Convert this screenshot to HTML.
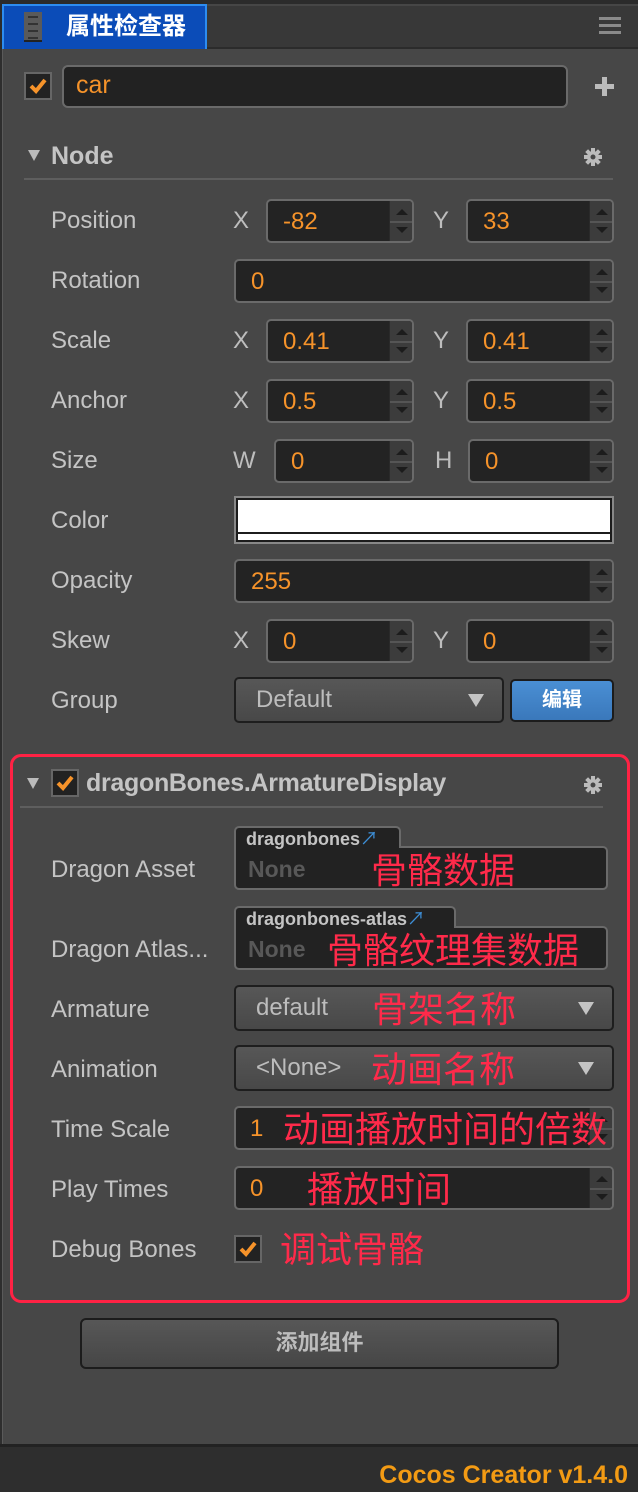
<!DOCTYPE html>
<html><head><meta charset="utf-8"><style>
*{margin:0;padding:0;box-sizing:border-box}
body{width:638px;height:1492px;background:#2e2e2e;position:relative;overflow:hidden;font-family:"Liberation Sans","Noto Sans CJK SC",sans-serif;color:#c2c2c2}
.a{position:absolute}
.lbl{position:absolute;left:51px;font-size:24px;color:#c4c4c4;line-height:26px}
.ax{position:absolute;font-size:24px;color:#bdbdbd;line-height:26px}
.num{position:absolute;height:44px;background:#232323;border:2px solid #6a6a6a;border-radius:5px;overflow:hidden}
.num .v{position:absolute;left:15px;top:8px;font-size:24px;color:#f6932a;line-height:26px}
.num .sp{position:absolute;right:0;top:0;width:23px;height:100%;background:#3c3c3c;border-left:1px solid #2a2a2a}
.num .sp:before{content:"";position:absolute;left:6px;top:8px;border-left:6px solid transparent;border-right:6px solid transparent;border-bottom:6px solid #1c1c1c}
.num .sp:after{content:"";position:absolute;left:6px;bottom:8px;border-left:6px solid transparent;border-right:6px solid transparent;border-top:6px solid #1c1c1c}
.num .sp i{position:absolute;left:0;right:0;top:50%;height:2px;background:#555}
.dd{position:absolute;height:46px;background:linear-gradient(#575757,#484848);border:2px solid #1e1e1e;border-radius:5px}
.dd .t{position:absolute;left:20px;top:8px;font-size:24px;color:#bdbdbd;line-height:26px}
.dd .ar{position:absolute;right:18px;top:15px;border-left:8px solid transparent;border-right:8px solid transparent;border-top:13px solid #c4c4c4}
.cb{position:absolute;width:28px;height:28px;background:#222;border:2px solid #666}
.cb svg{position:absolute;left:2px;top:2px}
.red{position:absolute;color:#ff2a4a;font-size:36px;line-height:40px;white-space:nowrap}
.gear{position:absolute}
</style></head><body>
<div class="a" style="left:0;top:0;width:638px;height:49px;background:#2b2b2b"></div>
<div class="a" style="left:207px;top:4px;width:431px;height:43px;background:#383838;border-top:2px solid #464646"></div>
<div class="a" style="left:2px;top:4px;width:205px;height:46px;background:#0b4cb8;border:2px solid #2d8cf0;border-bottom:none"></div>
<div class="a" style="left:24px;top:12px;width:18px;height:30px;background:#5a5a5a;border-bottom:2px solid #222"></div>
<div class="a" style="left:28px;top:16px;width:10px;height:2px;background:#333;box-shadow:0 7px 0 #333,0 14px 0 #333,0 21px 0 #333"></div>
<div class="a" style="left:66px;top:12px;font-size:24px;color:#fff;line-height:30px;font-weight:bold">属性检查器</div>
<div class="a" style="left:599px;top:17px;width:22px;height:3px;background:#8a8a8a;box-shadow:0 7px 0 #8a8a8a,0 14px 0 #8a8a8a"></div>
<div class="a" style="left:2px;top:49px;width:636px;height:1395px;background:#474747;border-left:1px solid #5a5a5a"></div>
<div class="a" style="left:0;top:1444px;width:638px;height:3px;background:#222"></div>
<div class="a" style="right:10px;top:1460px;font-size:25px;font-weight:bold;color:#f39b14;line-height:30px">Cocos Creator v1.4.0</div>

<div class="cb" style="left:24px;top:72px"><svg width="20" height="20"><path d="M3 10 L8 15 L17 4" stroke="#f6932a" stroke-width="4" fill="none"/></svg></div>
<div class="a" style="left:62px;top:65px;width:506px;height:43px;background:#222;border:2px solid #6a6a6a;border-radius:6px"></div>
<div class="a" style="left:76px;top:71px;font-size:25px;color:#f6932a;line-height:28px">car</div>
<div class="a" style="left:595px;top:84px;width:19px;height:5px;background:#bbb"></div>
<div class="a" style="left:602px;top:77px;width:5px;height:19px;background:#bbb"></div>

<div class="a" style="left:28px;top:150px;border-left:6px solid transparent;border-right:6px solid transparent;border-top:11px solid #bbb"></div>
<div class="a" style="left:51px;top:142px;font-size:25px;font-weight:bold;color:#c4c4c4;line-height:28px">Node</div>
<svg class="gear" style="left:584px;top:148px" width="18" height="18" viewBox="0 0 18 18"><g fill="#bbb"><circle cx="9" cy="9" r="6"/><rect x="7" y="0" width="4" height="18"/><rect x="0" y="7" width="18" height="4"/><rect x="7" y="0" width="4" height="18" transform="rotate(45 9 9)"/><rect x="7" y="0" width="4" height="18" transform="rotate(-45 9 9)"/></g><circle cx="9" cy="9" r="2.5" fill="#474747"/></svg>
<div class="a" style="left:24px;top:178px;width:589px;height:2px;background:#5e5e5e"></div>

<div class="lbl" style="top:208px">Position</div>
<div class="ax" style="left:233px;top:208px">X</div>
<div class="num" style="left:266px;top:199px;width:148px"><div class="v">-82</div><div class="sp"><i></i></div></div>
<div class="ax" style="left:433px;top:208px">Y</div>
<div class="num" style="left:466px;top:199px;width:148px"><div class="v">33</div><div class="sp"><i></i></div></div>

<div class="lbl" style="top:268px">Rotation</div>
<div class="num" style="left:234px;top:259px;width:380px"><div class="v">0</div><div class="sp"><i></i></div></div>

<div class="lbl" style="top:328px">Scale</div>
<div class="ax" style="left:233px;top:328px">X</div>
<div class="num" style="left:266px;top:319px;width:148px"><div class="v">0.41</div><div class="sp"><i></i></div></div>
<div class="ax" style="left:433px;top:328px">Y</div>
<div class="num" style="left:466px;top:319px;width:148px"><div class="v">0.41</div><div class="sp"><i></i></div></div>

<div class="lbl" style="top:388px">Anchor</div>
<div class="ax" style="left:233px;top:388px">X</div>
<div class="num" style="left:266px;top:379px;width:148px"><div class="v">0.5</div><div class="sp"><i></i></div></div>
<div class="ax" style="left:433px;top:388px">Y</div>
<div class="num" style="left:466px;top:379px;width:148px"><div class="v">0.5</div><div class="sp"><i></i></div></div>

<div class="lbl" style="top:448px">Size</div>
<div class="ax" style="left:233px;top:448px">W</div>
<div class="num" style="left:274px;top:439px;width:140px"><div class="v">0</div><div class="sp"><i></i></div></div>
<div class="ax" style="left:435px;top:448px">H</div>
<div class="num" style="left:468px;top:439px;width:146px"><div class="v">0</div><div class="sp"><i></i></div></div>

<div class="lbl" style="top:508px">Color</div>
<div class="a" style="left:234px;top:496px;width:380px;height:48px;background:#888;padding:2px"><div style="width:100%;height:100%;background:#fff;border:2px solid #1c1c1c;position:relative"><div style="position:absolute;left:0;right:0;bottom:6px;height:2px;background:#1c1c1c"></div></div></div>

<div class="lbl" style="top:568px">Opacity</div>
<div class="num" style="left:234px;top:559px;width:380px"><div class="v">255</div><div class="sp"><i></i></div></div>

<div class="lbl" style="top:628px">Skew</div>
<div class="ax" style="left:233px;top:628px">X</div>
<div class="num" style="left:266px;top:619px;width:148px"><div class="v">0</div><div class="sp"><i></i></div></div>
<div class="ax" style="left:433px;top:628px">Y</div>
<div class="num" style="left:466px;top:619px;width:148px"><div class="v">0</div><div class="sp"><i></i></div></div>

<div class="lbl" style="top:688px">Group</div>
<div class="dd" style="left:234px;top:677px;width:270px"><div class="t">Default</div><div class="ar"></div></div>
<div class="a" style="left:510px;top:679px;width:104px;height:43px;background:linear-gradient(#4a8fd4,#3a78bb);border:2px solid #1c1c1c;border-radius:5px;color:#fff;font-weight:bold;font-size:20px;text-align:center;line-height:38px">编辑</div>

<div class="a" style="left:10px;top:754px;width:620px;height:549px;border:3px solid #ff2244;border-radius:11px"></div>
<div class="a" style="left:27px;top:778px;border-left:6px solid transparent;border-right:6px solid transparent;border-top:11px solid #bbb"></div>
<div class="cb" style="left:51px;top:769px"><svg width="20" height="20"><path d="M3 10 L8 15 L17 4" stroke="#f6932a" stroke-width="4" fill="none"/></svg></div>
<div class="a" style="left:86px;top:769px;font-size:25px;font-weight:bold;color:#c4c4c4;line-height:28px;letter-spacing:-0.3px">dragonBones.ArmatureDisplay</div>
<svg class="gear" style="left:584px;top:776px" width="18" height="18" viewBox="0 0 18 18"><g fill="#bbb"><circle cx="9" cy="9" r="6"/><rect x="7" y="0" width="4" height="18"/><rect x="0" y="7" width="18" height="4"/><rect x="7" y="0" width="4" height="18" transform="rotate(45 9 9)"/><rect x="7" y="0" width="4" height="18" transform="rotate(-45 9 9)"/></g><circle cx="9" cy="9" r="2.5" fill="#474747"/></svg>
<div class="a" style="left:20px;top:806px;width:583px;height:2px;background:#5e5e5e"></div>

<div class="lbl" style="top:857px">Dragon Asset</div>
<div class="a" style="left:234px;top:826px;width:167px;height:24px;background:#222;border:2px solid #6a6a6a;border-bottom:none;border-radius:5px 5px 0 0"></div>
<div class="a" style="left:234px;top:846px;width:374px;height:44px;background:#222;border:2px solid #6a6a6a;border-radius:0 5px 5px 5px"></div>
<div class="a" style="left:236px;top:846px;width:163px;height:4px;background:#222"></div>
<div class="a" style="left:246px;top:829px;font-size:18px;font-weight:bold;color:#c4c4c4;line-height:20px">dragonbones<span style="color:#3d8fd8;font-weight:normal">&#x2197;</span></div>
<div class="a" style="left:248px;top:856px;font-size:23px;font-weight:bold;color:#585858;line-height:26px">None</div>
<div class="red" style="left:371px;top:851px">骨骼数据</div>

<div class="lbl" style="top:937px">Dragon Atlas...</div>
<div class="a" style="left:234px;top:906px;width:222px;height:24px;background:#222;border:2px solid #6a6a6a;border-bottom:none;border-radius:5px 5px 0 0"></div>
<div class="a" style="left:234px;top:926px;width:374px;height:44px;background:#222;border:2px solid #6a6a6a;border-radius:0 5px 5px 5px"></div>
<div class="a" style="left:236px;top:926px;width:218px;height:4px;background:#222"></div>
<div class="a" style="left:246px;top:909px;font-size:18px;font-weight:bold;color:#c4c4c4;line-height:20px">dragonbones-atlas<span style="color:#3d8fd8;font-weight:normal">&#x2197;</span></div>
<div class="a" style="left:248px;top:936px;font-size:23px;font-weight:bold;color:#585858;line-height:26px">None</div>
<div class="red" style="left:327px;top:931px">骨骼纹理集数据</div>

<div class="lbl" style="top:997px">Armature</div>
<div class="dd" style="left:234px;top:985px;width:380px"><div class="t">default</div><div class="ar"></div></div>
<div class="red" style="left:372px;top:990px">骨架名称</div>

<div class="lbl" style="top:1057px">Animation</div>
<div class="dd" style="left:234px;top:1045px;width:380px"><div class="t">&lt;None&gt;</div><div class="ar"></div></div>
<div class="red" style="left:371px;top:1050px">动画名称</div>

<div class="lbl" style="top:1117px">Time Scale</div>
<div class="num" style="left:234px;top:1106px;width:380px"><div class="v" style="left:14px">1</div><div class="sp"><i></i></div></div>
<div class="red" style="left:283px;top:1110px">动画播放时间的倍数</div>

<div class="lbl" style="top:1177px">Play Times</div>
<div class="num" style="left:234px;top:1166px;width:380px"><div class="v" style="left:14px">0</div><div class="sp"><i></i></div></div>
<div class="red" style="left:307px;top:1170px">播放时间</div>

<div class="lbl" style="top:1237px">Debug Bones</div>
<div class="cb" style="left:234px;top:1235px"><svg width="20" height="20"><path d="M3 10 L8 15 L17 4" stroke="#f6932a" stroke-width="4" fill="none"/></svg></div>
<div class="red" style="left:280px;top:1230px">调试骨骼</div>

<div class="a" style="left:80px;top:1318px;width:479px;height:51px;background:linear-gradient(#575757,#464646);border:2px solid #1c1c1c;border-radius:6px;text-align:center;font-size:22px;font-weight:bold;color:#bcbcbc;line-height:46px">添加组件</div>
</body></html>
